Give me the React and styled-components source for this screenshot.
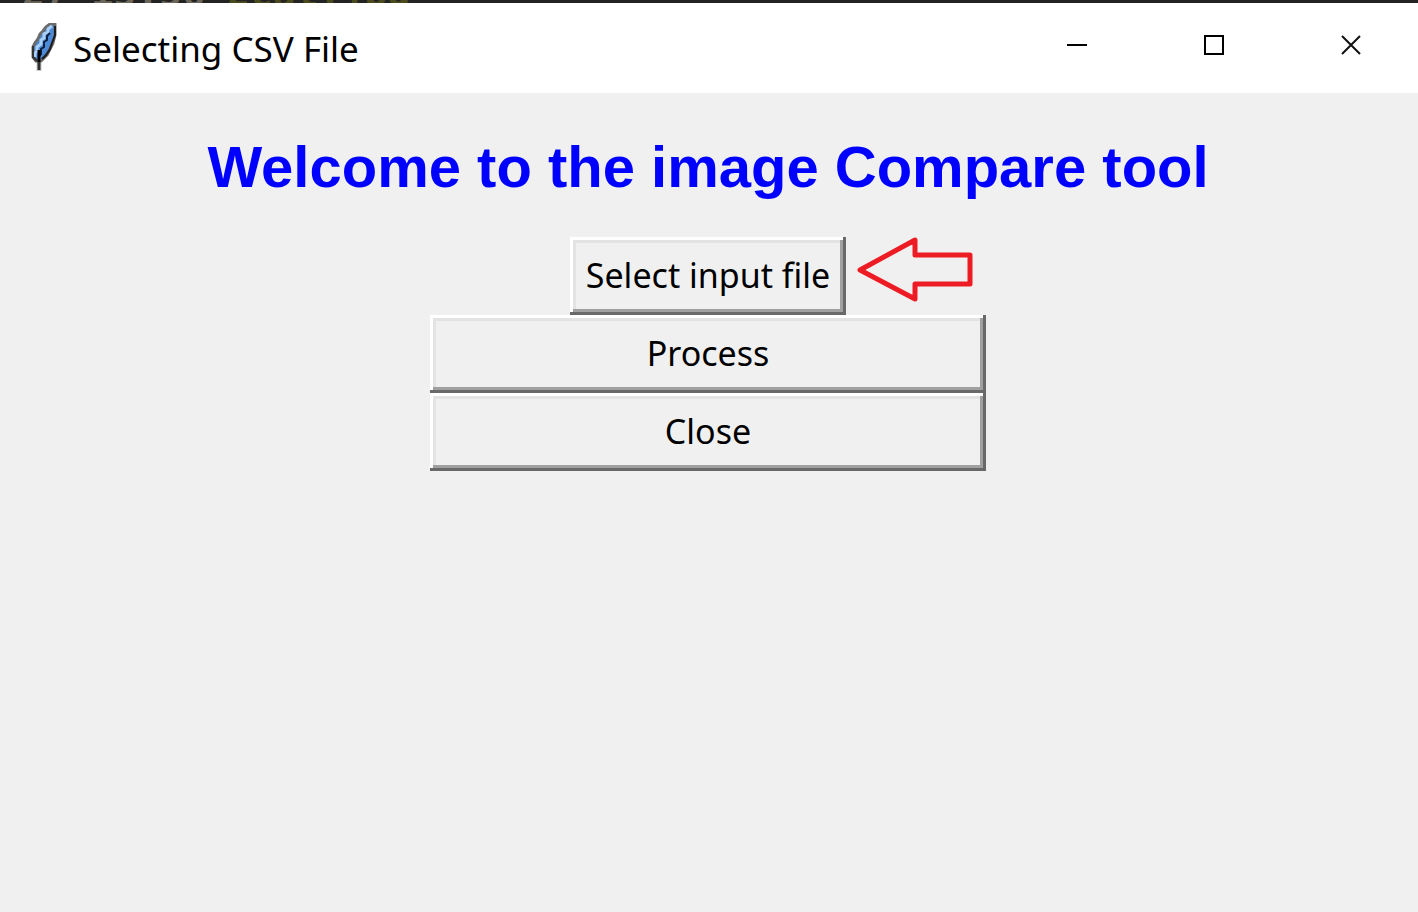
import React from "react";
import styled, { createGlobalStyle } from "styled-components";

const GlobalStyle = createGlobalStyle`
  * { box-sizing: border-box; }
  body { margin: 0; background: #f0f0f0; }
`;

const uiFont = `"Noto Sans", "Open Sans", sans-serif`;

const Page = styled.div`
  min-height: 100vh;
  display: flex;
  flex-direction: column;
  background: #f0f0f0;
  color: #000;
  font-family: ${uiFont};
`;

const EditorEdge = styled.div`
  height: 3px;
  padding-left: 22px;
  display: flex;
  align-items: flex-end;
  gap: 22px;
  overflow: hidden;
  background: #232323;
  color: #6b6659;
  font: 700 38px/20px "DejaVu Sans Mono", monospace;
  white-space: pre;
`;

const FileName = styled.span`
  color: #4a4a1c;
`;

const TitleBar = styled.header`
  height: 90px;
  display: flex;
  align-items: flex-start;
  background: #fff;
`;

const Caption = styled.div`
  flex: 1;
  height: 90px;
  padding: 0 0 2px 30px;
  display: flex;
  align-items: center;
  gap: 15px;
`;

const Title = styled.h1`
  margin: 0;
  padding-top: 4px;
  font: 400 35px/48px ${uiFont};
`;

const WindowControls = styled.div`
  display: flex;
  gap: 3px;
`;

const ControlButton = styled.button`
  width: 134px;
  height: 84px;
  padding: 0;
  display: flex;
  align-items: center;
  justify-content: center;
  border: 0;
  background: transparent;
`;

const Content = styled.main`
  flex: 1;
  padding: 40px 2px 0 0;
  display: flex;
  flex-direction: column;
  align-items: center;
`;

const Welcome = styled.h2`
  margin: 0 0 38px;
  padding-top: 2px;
  color: #00f;
  font: 700 58px/64px "Liberation Sans", Arial, sans-serif;
`;

const SelectRow = styled.div`
  width: 100%;
  display: grid;
  grid-template-columns: 1fr auto 1fr;
  align-items: start;
  column-gap: 11px;
`;

const BevelButton = styled.button`
  width: ${({ $wide }) => ($wide ? 556 : 276)}px;
  height: 78px;
  padding: 0 0 2px;
  border: 0;
  background: #f0f0f0;
  box-shadow:
    inset -3px -3px #696969,
    inset 3px 3px #fff,
    inset -6px -6px #a0a0a0,
    inset 6px 6px #e3e3e3;
  color: #000;
  font: 400 34px/48px ${uiFont};
  white-space: nowrap;
`;

const Arrow = styled.svg`
  grid-column: 3;
  display: block;
`;

function Feather() {
  return (
    <svg width="28" height="48" viewBox="0 0 28 48" aria-hidden="true">
      <path d="M25 1H20L16 4L13 8L10 11L8 16L5 20L3 24V34L6 38H11L17 32L20 26L23 20L25 12Z" fill="#4a8ad8" stroke="#6c6c6c" strokeWidth="3" strokeLinejoin="round" />
      <path d="M22 3L18 6V9L14 11V15L11 17V21L7 24V28L5 30V34" fill="none" stroke="#a9d0f8" strokeWidth="3" />
      <path d="M20 10L17 13V17L14 19V24L11 26V31L9 33" fill="none" stroke="#10203c" strokeWidth="2" />
      <path d="M25 3V12L22 20L20 26L16 32L12 36" fill="none" stroke="#1c1c1c" strokeWidth="2" />
      <path d="M3 23V34L7 38" fill="none" stroke="#333" strokeWidth="2" />
      <path d="M9 27V47" fill="none" stroke="#000" strokeWidth="3" />
      <path d="M9 39V48" fill="none" stroke="#777" strokeWidth="5" opacity=".4" />
    </svg>
  );
}

export default function App() {
  return (
    <>
      <GlobalStyle />
      <Page>
        <EditorEdge aria-hidden="true">
          <span>27 15:56</span>
          <FileName>2cat.jpg</FileName>
        </EditorEdge>
        <TitleBar>
          <Caption>
            <Feather />
            <Title>Selecting CSV File</Title>
          </Caption>
          <WindowControls>
            <ControlButton type="button" aria-label="Minimize">
              <svg width="20" height="20" viewBox="0 0 20 20">
                <path d="M0 10H20" stroke="#000" strokeWidth="2" />
              </svg>
            </ControlButton>
            <ControlButton type="button" aria-label="Maximize">
              <svg width="20" height="20" viewBox="0 0 20 20">
                <path d="M1 1H19V19H1Z" fill="none" stroke="#000" strokeWidth="2" />
              </svg>
            </ControlButton>
            <ControlButton type="button" aria-label="Close window">
              <svg width="20" height="20" viewBox="0 0 20 20">
                <path d="M1 1L19 19M19 1L1 19" stroke="#111" strokeWidth="2" />
              </svg>
            </ControlButton>
          </WindowControls>
        </TitleBar>
        <Content>
          <Welcome>Welcome to the image Compare tool</Welcome>
          <SelectRow>
            <span />
            <BevelButton type="button">Select input file</BevelButton>
            <Arrow width="118" height="66" viewBox="0 0 118 66" aria-hidden="true">
              <path d="M3 33L58 3V18H113V47H58V62Z" fill="none" stroke="#ed1c24" strokeWidth="5" strokeLinejoin="round" />
            </Arrow>
          </SelectRow>
          <BevelButton type="button" $wide>Process</BevelButton>
          <BevelButton type="button" $wide>Close</BevelButton>
        </Content>
      </Page>
    </>
  );
}
